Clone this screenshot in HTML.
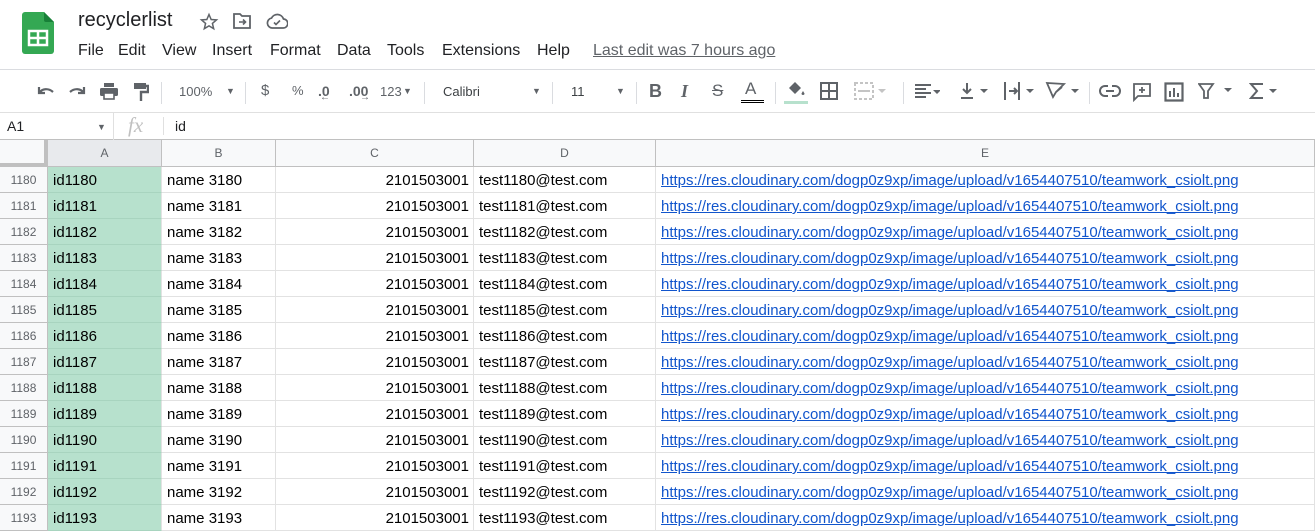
<!DOCTYPE html>
<html><head><meta charset="utf-8"><style>
*{margin:0;padding:0;box-sizing:border-box}
body{width:1315px;height:524px;overflow:hidden;background:#fff;font-family:"Liberation Sans",Arial,sans-serif;position:relative;color:#202124}
.a{position:absolute}
.menu span{position:absolute;top:42px;font-size:16px;color:#202124}
.tb{position:absolute;top:69px;left:0;width:1315px;height:44px;border-top:1px solid #dadce0;border-bottom:1px solid #e0e0e0}
.ic{position:absolute;color:#5f6368;font-size:14px}
.sep{position:absolute;top:82px;width:1px;height:22px;background:#dadce0}
.fb{position:absolute;top:113px;height:27px;width:1315px;border-bottom:1px solid #c0c0c0}
.hdr{position:absolute;top:140px;height:27px;background:#f8f9fa;border-right:1px solid #c0c0c0;border-bottom:1px solid #c0c0c0;font-size:12px;color:#5f6368;text-align:center;line-height:26px}
.row{position:absolute;left:0;width:1315px;height:26px}
.row div{position:absolute;top:0;height:26px;border-right:1px solid #e2e2e2;border-bottom:1px solid #e2e2e2;line-height:27px;font-size:15px;white-space:nowrap;overflow:hidden;color:#000}
.rn{left:0;width:48px;background:#f8f9fa;color:#5f6368!important;font-size:12px!important;text-align:center;border-right:1px solid #c0c0c0!important;border-bottom-color:#c0c0c0!important}
.ca{left:48px;width:114px;background:#b7e1cd;padding-left:5px;border-bottom-color:#a8d4bf!important}
.cb{left:162px;width:114px;padding-left:5px}
.cc{left:276px;width:198px;text-align:right;padding-right:4px}
.cd{left:474px;width:182px;padding-left:5px}
.ce{left:656px;width:659px;padding-left:5px;color:#1155cc!important;text-decoration:underline;font-family:Arial,"Liberation Sans",sans-serif}
</style></head><body>
<svg class="a" style="left:22px;top:12px" width="32" height="42" viewBox="0 0 32 42"><path d="M3 0h19l10 10v29a3 3 0 0 1-3 3H3a3 3 0 0 1-3-3V3a3 3 0 0 1 3-3z" fill="#34a853"/><path d="M22 0v8a2 2 0 0 0 2 2h8z" fill="#188038"/><rect x="7" y="19" width="18" height="14" fill="none" stroke="#fff" stroke-width="2.5"/><path d="M7 26h18M16 19v14" stroke="#fff" stroke-width="2.5"/></svg>
<div class="a" style="left:78px;top:9px;font-size:20px;color:#202124">recyclerlist</div>
<svg class="a" style="left:199px;top:12px" width="20" height="20" viewBox="0 0 24 24"><path d="M12 3l2.6 6 6.4.5-4.9 4.2 1.5 6.3L12 16.6 6.4 20l1.5-6.3L3 9.5 9.4 9z" fill="none" stroke="#5f6368" stroke-width="1.8"/></svg>
<svg class="a" style="left:232px;top:12px" width="20" height="18" viewBox="0 0 20 18"><path d="M2 2h6l2 2h8v12H2z" fill="none" stroke="#5f6368" stroke-width="1.8"/><path d="M7 10h6M11 7.5l2.5 2.5-2.5 2.5" stroke="#5f6368" stroke-width="1.6" fill="none"/></svg>
<svg class="a" style="left:266px;top:13px" width="22" height="16" viewBox="0 0 22 16"><path d="M6 15a5 5 0 0 1-.5-9.9A6.5 6.5 0 0 1 17.5 6a4.5 4.5 0 0 1-.5 9z" fill="none" stroke="#5f6368" stroke-width="1.7"/><path d="M8 9.5l2 2 4-4" fill="none" stroke="#5f6368" stroke-width="1.6"/></svg>
<div class="menu"><span style="left:78px">File</span><span style="left:118px">Edit</span><span style="left:162px">View</span><span style="left:212px">Insert</span><span style="left:270px">Format</span><span style="left:337px">Data</span><span style="left:387px">Tools</span><span style="left:442px">Extensions</span><span style="left:537px">Help</span><span style="left:593px;color:#5f6368;text-decoration:underline;font-size:16px;top:42px">Last edit was 7 hours ago</span></div>
<div class="tb"></div>
<svg class="a" style="left:36px;top:84px" width="20" height="14" viewBox="0 0 20 14"><path d="M3 3v6h6M3.5 8.5C6 5 12 3.5 17 8" fill="none" stroke="#5f6368" stroke-width="2.2"/></svg>
<svg class="a" style="left:67px;top:84px" width="20" height="14" viewBox="0 0 20 14"><path d="M17 3v6h-6M16.5 8.5C14 5 8 3.5 3 8" fill="none" stroke="#5f6368" stroke-width="2.2"/></svg>
<svg class="a" style="left:99px;top:82px" width="20" height="18" viewBox="0 0 20 18"><rect x="5" y="1" width="10" height="4" fill="#5f6368"/><rect x="1" y="6" width="18" height="8" rx="1.5" fill="#5f6368"/><rect x="5" y="11" width="10" height="6" fill="#fff" stroke="#5f6368" stroke-width="1.6"/></svg>
<svg class="a" style="left:133px;top:82px" width="16" height="20" viewBox="0 0 16 20"><rect x="1" y="1" width="12" height="6" fill="#5f6368"/><path d="M13 4h2v6H8v9" fill="none" stroke="#5f6368" stroke-width="2.4"/></svg>
<div class="sep" style="left:161px"></div>
<div class="ic" style="left:179px;top:84px;font-size:13px">100%</div><div class="ic" style="left:226px;top:86px;font-size:9px">▼</div>
<div class="sep" style="left:245px"></div>
<div class="ic" style="left:261px;top:82px;font-size:15px">$</div><div class="ic" style="left:292px;top:83px;font-size:13px">%</div>
<div class="ic" style="left:318px;top:83px;font-size:14px;font-weight:bold">.0</div><div class="ic" style="left:320px;top:92px;font-size:10px">←</div>
<div class="ic" style="left:349px;top:83px;font-size:14px;font-weight:bold">.00</div><div class="ic" style="left:360px;top:92px;font-size:10px">→</div>
<div class="ic" style="left:380px;top:84px;font-size:13px">123</div><div class="ic" style="left:403px;top:86px;font-size:9px">▼</div>
<div class="sep" style="left:424px"></div>
<div class="ic" style="left:443px;top:84px;font-size:13px;color:#3c4043">Calibri</div><div class="ic" style="left:532px;top:86px;font-size:9px">▼</div>
<div class="sep" style="left:552px"></div>
<div class="ic" style="left:571px;top:84px;font-size:13px;color:#3c4043">11</div><div class="ic" style="left:616px;top:86px;font-size:9px">▼</div>
<div class="sep" style="left:636px"></div>
<div class="ic" style="left:649px;top:81px;font-size:18px;font-weight:bold">B</div>
<div class="ic" style="left:681px;top:81px;font-size:18px;font-style:italic;font-family:'Liberation Serif',serif;font-weight:bold">I</div>
<div class="ic" style="left:712px;top:81px;font-size:17px;text-decoration:line-through">S</div>
<div class="ic" style="left:745px;top:79px;font-size:17px">A</div><div class="a" style="left:741px;top:100px;width:23px;height:3px;border-top:1px solid #000;border-bottom:1px solid #000"></div>
<div class="sep" style="left:775px"></div>
<svg class="a" style="left:785px;top:81px" width="22" height="16" viewBox="0 0 22 16"><path d="M4 7l6-6 6 6-6 6z" fill="#5f6368"/><path d="M18 10l1.5 2.5a1.5 1.5 0 1 1-3 0z" fill="#5f6368"/></svg>
<div class="a" style="left:784px;top:101px;width:24px;height:3px;background:#b7e1cd"></div>
<svg class="a" style="left:820px;top:82px" width="18" height="18" viewBox="0 0 18 18"><path d="M1 1h16v16H1zM9 1v16M1 9h16" fill="none" stroke="#5f6368" stroke-width="2"/></svg>
<svg class="a" style="left:854px;top:82px" width="34" height="18" viewBox="0 0 34 18"><path d="M1 1h18v16H1z" fill="none" stroke="#c4c4c4" stroke-width="2" stroke-dasharray="3 2"/><path d="M4 9h12" stroke="#c4c4c4" stroke-width="2"/><path d="M24 7l4 4 4-4z" fill="#c4c4c4"/></svg>
<div class="sep" style="left:903px"></div>
<svg class="a" style="left:914px;top:83px" width="26" height="16" viewBox="0 0 26 16"><path d="M1 2h16M1 6h11M1 10h16M1 14h11" stroke="#5f6368" stroke-width="2"/><path d="M19 7l4 4 4-4z" fill="#5f6368"/></svg>
<svg class="a" style="left:960px;top:82px" width="30" height="18" viewBox="0 0 30 18"><path d="M7 1v10M3 7l4 4 4-4M1 16h12" fill="none" stroke="#5f6368" stroke-width="2"/><path d="M20 7l4 4 4-4z" fill="#5f6368"/></svg>
<svg class="a" style="left:1003px;top:81px" width="32" height="20" viewBox="0 0 32 20"><path d="M2 1v18M16 1v18M6 10h8M11 7l3 3-3 3" fill="none" stroke="#5f6368" stroke-width="2"/><path d="M23 8l4 4 4-4z" fill="#5f6368"/></svg>
<svg class="a" style="left:1045px;top:81px" width="36" height="20" viewBox="0 0 36 20"><path d="M2 2l6 14 3-5 8-8zM11 11l6-5" fill="none" stroke="#5f6368" stroke-width="1.8"/><path d="M26 8l4 4 4-4z" fill="#5f6368"/></svg>
<div class="sep" style="left:1089px"></div>
<svg class="a" style="left:1099px;top:84px" width="22" height="14" viewBox="0 0 22 14"><path d="M9 2H6a5 5 0 0 0 0 10h3M13 2h3a5 5 0 0 1 0 10h-3M7 7h8" fill="none" stroke="#5f6368" stroke-width="2"/></svg>
<svg class="a" style="left:1132px;top:82px" width="20" height="20" viewBox="0 0 20 20"><path d="M2 2h16v12H6l-4 4z" fill="none" stroke="#5f6368" stroke-width="1.8"/><path d="M10 5v6M7 8h6" stroke="#5f6368" stroke-width="1.8"/></svg>
<svg class="a" style="left:1164px;top:82px" width="20" height="20" viewBox="0 0 20 20"><path d="M1.5 1.5h17v17h-17z" fill="none" stroke="#5f6368" stroke-width="2.2"/><path d="M6 9v6M10 6v9M14 11v4" stroke="#5f6368" stroke-width="2"/></svg>
<svg class="a" style="left:1198px;top:83px" width="40" height="16" viewBox="0 0 40 16"><path d="M1 1h14l-5 7v7h-4V8z" fill="none" stroke="#5f6368" stroke-width="1.8"/><path d="M26 5l4 4 4-4z" fill="#5f6368"/></svg>
<svg class="a" style="left:1249px;top:82px" width="32" height="18" viewBox="0 0 32 18"><path d="M14 2H2l6 7-6 7h12" fill="none" stroke="#5f6368" stroke-width="2"/><path d="M20 7l4 4 4-4z" fill="#5f6368"/></svg>
<div class="fb"></div>
<div class="a" style="left:7px;top:118px;font-size:14px">A1</div>
<div class="ic" style="left:97px;top:122px;font-size:9px">▼</div>
<div class="a" style="left:113px;top:113px;width:1px;height:27px;background:#e0e0e0"></div>
<div class="a" style="left:128px;top:113px;font-size:21px;color:#c0c0c0;font-style:italic;font-family:'Liberation Serif',serif">fx</div>
<div class="a" style="left:163px;top:117px;width:1px;height:18px;background:#e0e0e0"></div>
<div class="a" style="left:175px;top:118px;font-size:14px">id</div>
<div class="hdr" style="left:0;width:48px;border-right:4px solid #c0c0c0;border-bottom:4px solid #c0c0c0;height:27px"></div>
<div class="hdr" style="left:48px;width:114px;background:#e8eaed">A</div>
<div class="hdr" style="left:162px;width:114px">B</div>
<div class="hdr" style="left:276px;width:198px">C</div>
<div class="hdr" style="left:474px;width:182px">D</div>
<div class="hdr" style="left:656px;width:659px">E</div>
<div id="rows"></div>
<script>
var h='';for(var i=0;i<14;i++){var n=1180+i;h+='<div class="row" style="top:'+(167+26*i)+'px"><div class="rn">'+n+'</div><div class="ca">id'+n+'</div><div class="cb">name '+(n+2000)+'</div><div class="cc">2101503001</div><div class="cd">test'+n+'@test.com</div><div class="ce">https://res.cloudinary.com/dogp0z9xp/image/upload/v1654407510/teamwork_csiolt.png</div></div>';}
document.getElementById('rows').innerHTML=h;
</script>
</body></html>
